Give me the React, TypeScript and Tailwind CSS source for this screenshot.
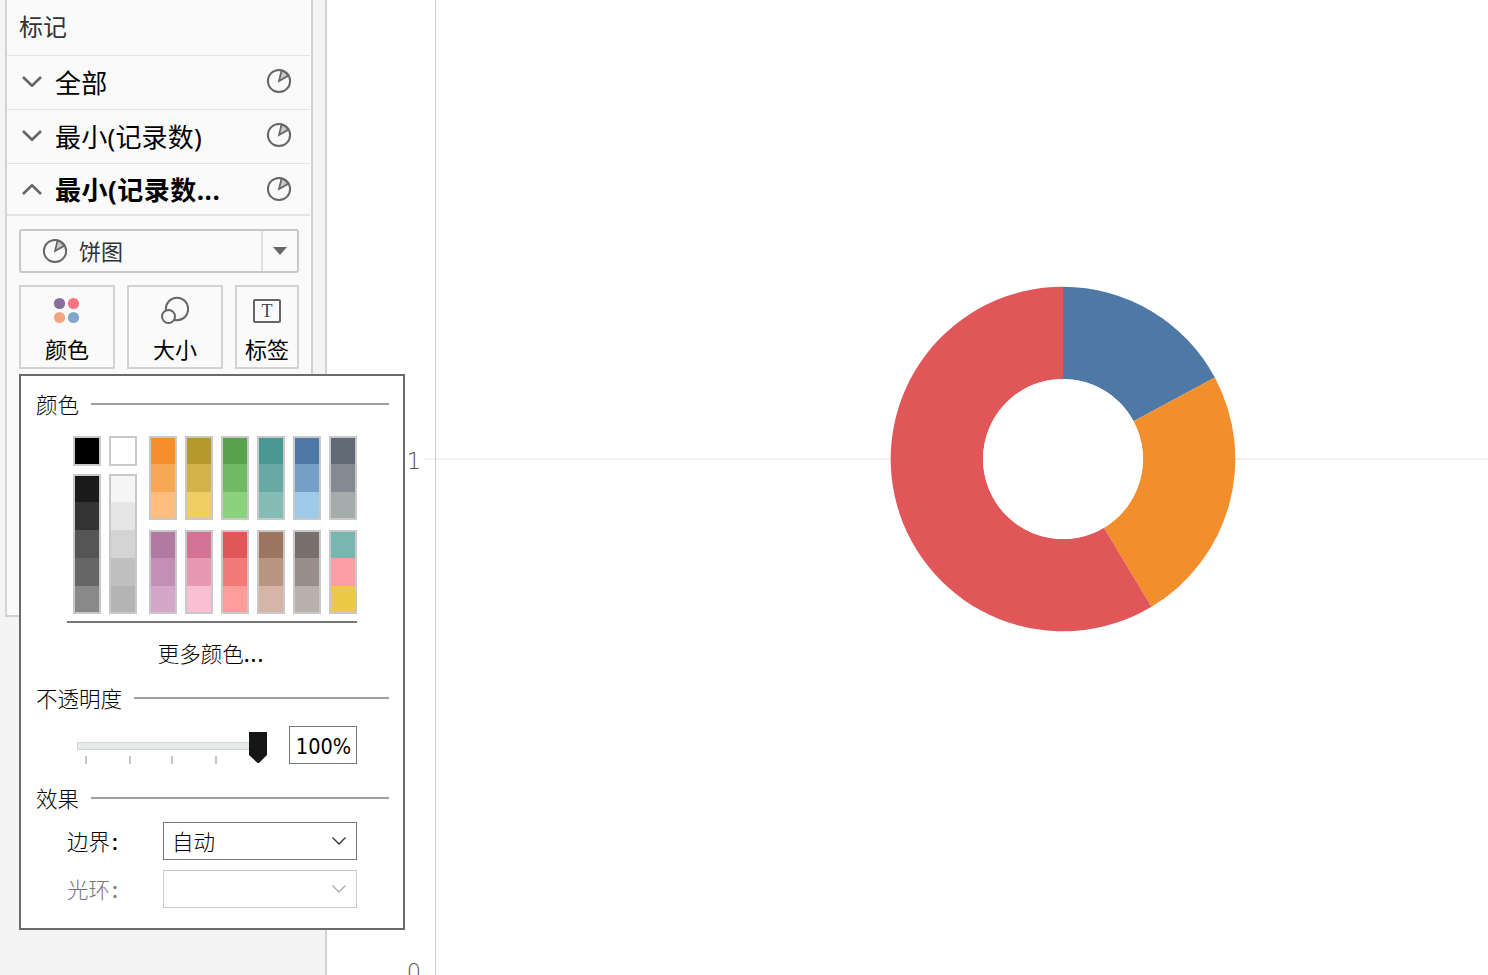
import { useState } from 'react'

const BASIC = [
  { solid: '#000000', shades: ['#1a1a1a', '#333333', '#555555', '#666666', '#898989'] },
  { solid: '#ffffff', shades: ['#f5f5f5', '#e6e6e6', '#d4d4d4', '#c0c0c0', '#b4b4b4'] },
]

const PALETTE = [
  ['#f58f2c', '#faa755', '#ffbe7d'],
  ['#b6992d', '#d2b349', '#f1ce63'],
  ['#59a14f', '#71b966', '#8cd17d'],
  ['#499894', '#69a9a4', '#86bcb6'],
  ['#4e79a7', '#769fc7', '#a0cbe8'],
  ['#616b75', '#838a92', '#a5acac'],
  ['#b07aa1', '#c28fb5', '#d4a6c8'],
  ['#d37295', '#e799b3', '#fabfd2'],
  ['#e15759', '#f27b79', '#ff9d9a'],
  ['#9d7660', '#b99480', '#d7b5a6'],
  ['#79706e', '#998e8c', '#bab0ac'],
  ['#79b6b0', '#ff9da7', '#edc948'],
]

const CARDS = [
  { label: '全部', open: false },
  { label: '最小(记录数)', open: false },
  { label: '最小(记录数...', open: true },
]

const SLICES = [
  { from: 0, to: 61.8, color: '#4e79a7' },
  { from: 61.8, to: 149.1, color: '#f38e2c' },
  { from: 149.1, to: 360, color: '#e15759' },
]

function slicePath(from: number, to: number, outer: number, inner: number) {
  const pt = (deg: number, r: number) => {
    const a = (deg * Math.PI) / 180
    return `${(r * Math.sin(a)).toFixed(2)} ${(-r * Math.cos(a)).toFixed(2)}`
  }
  const large = to - from > 180 ? 1 : 0
  return `M${pt(from, outer)}A${outer} ${outer} 0 ${large} 1 ${pt(to, outer)}L${pt(to, inner)}A${inner} ${inner} 0 ${large} 0 ${pt(from, inner)}Z`
}

function PieIcon() {
  return (
    <svg width="26" height="26" viewBox="0 0 26 26" fill="none" stroke="#666" strokeWidth="2" className="shrink-0">
      <path d="M13 13L15.6 2.4A11 11 0 0 1 22.2 7.8Z" fill="#c8c8c8" strokeWidth="1.7" />
      <circle cx="13" cy="13" r="11.1" />
    </svg>
  )
}

function Chevron({ up }: { up?: boolean }) {
  return (
    <svg width="20" height="12" viewBox="0 0 20 12" fill="none" stroke="#666" strokeWidth="2.6" className="shrink-0">
      <path d={up ? 'M1 11L10 2.2L19 11' : 'M1 2L10 10.8L19 2'} />
    </svg>
  )
}

function SelectArrow({ color }: { color: string }) {
  return (
    <svg width="14" height="8" viewBox="0 0 14 8" fill="none" stroke={color} strokeWidth="1.3">
      <path d="M0.5 0.5L7 7L13.5 0.5" />
    </svg>
  )
}

function Swatch({ colors }: { colors: string[] }) {
  return (
    <div className="flex w-7 flex-col border-2 border-[#c8c8c8]">
      {colors.map((c, i) => (
        <button
          key={c}
          className={i === 0 || i === colors.length - 1 ? 'h-[26px]' : 'h-7'}
          style={{ backgroundColor: c }}
        />
      ))}
    </div>
  )
}

function SectionTitle({ text }: { text: string }) {
  return (
    <div className="flex h-8 items-center">
      <span className="whitespace-nowrap pt-0.5 text-[21.5px] leading-8">{text}</span>
      <div className="ml-3 h-0.5 flex-1 bg-[#a0a0a0]" />
    </div>
  )
}

function ColorPopup() {
  const [opacity, setOpacity] = useState('100%')

  return (
    <div className="absolute left-[19px] top-[374px] h-[556px] w-[386px] border-2 border-[#6b6b6b] bg-white pl-[15px] pr-[14px] pt-[12px] font-['Noto_Sans','Noto_Sans_CJK_SC',sans-serif] font-light text-black">
      <SectionTitle text="颜色" />

      <div className="ml-[37px] mt-4 flex h-[178px]">
        <div className="flex gap-2">
          {BASIC.map((b) => (
            <div key={b.solid} className="flex flex-col gap-2">
              <button className="h-[30px] w-7 border-2 border-[#c8c8c8]" style={{ backgroundColor: b.solid }} />
              <Swatch colors={b.shades} />
            </div>
          ))}
        </div>
        <div className="ml-3 grid grid-cols-6 content-start gap-x-2 gap-y-2.5">
          {PALETTE.map((colors) => (
            <Swatch key={colors[0]} colors={colors} />
          ))}
        </div>
      </div>

      <div className="ml-[31px] mt-[7px] h-0.5 w-[290px] bg-[#777]" />
      <button className="ml-[30px] mt-[15px] flex h-8 w-[290px] justify-center text-[21.5px] leading-8">
        更多颜色<span className="font-medium tracking-[1px]">...</span>
      </button>

      <div className="mt-3">
        <SectionTitle text="不透明度" />
      </div>

      <div className="ml-[41px] mt-3 flex h-[38px]">
        <svg width="192" height="38" viewBox="0 0 192 38">
          <rect x="0.5" y="16.5" width="180" height="7" fill="#e6eaea" stroke="#d0d4d4" />
          {[8, 52, 94, 138].map((x) => (
            <rect key={x} x={x} y="30" width="2" height="8" fill="#c6c6c6" />
          ))}
          <path d="M172 6H190V29L182 37H180.5L172 29Z" fill="#161616" />
        </svg>
        <input
          value={opacity}
          onChange={(e) => setOpacity(e.target.value)}
          className="ml-5 h-[38px] w-[68px] border border-[#777] pl-px pt-0.5 text-center font-['DejaVu_Sans_Condensed','DejaVu_Sans',sans-serif] text-[21.5px] font-normal outline-none"
        />
      </div>

      <div className="mt-[18px]">
        <SectionTitle text="效果" />
      </div>

      <div className="ml-[31px] mt-2 flex h-[38px] items-center">
        <span className="w-24 pt-0.5 text-[21.5px]">
          边界<span className="ml-0.5 font-medium">:</span>
        </span>
        <button className="flex h-[38px] w-[194px] items-center justify-between border border-[#777] pl-2 pr-[10px] text-[21.5px]">
          <span className="pt-0.5">自动</span>
          <SelectArrow color="#333" />
        </button>
      </div>
      <div className="ml-[31px] mt-2.5 flex h-[38px] items-center text-[#777]">
        <span className="w-24 pt-0.5 text-[21.5px]">
          光环<span className="ml-0.5 font-medium">:</span>
        </span>
        <button disabled className="flex h-[38px] w-[194px] items-center justify-end border border-[#ccc] pr-[10px]">
          <SelectArrow color="#aaa" />
        </button>
      </div>
    </div>
  )
}

function MarksPanel() {
  return (
    <aside className="h-[975px] w-[327px] shrink-0 border-r-2 border-[#d2d2d2] bg-[#f4f4f4] pl-[5px]">
      <div className="h-[617px] w-[308px] border-x-2 border-b-2 border-[#d2d2d2] bg-[#fafafa]">
        <div className="h-[55px] pl-3 pt-[9px] text-[24px] leading-9 text-[#333]">标记</div>

        {CARDS.map((card) => (
          <div
            key={card.label}
            className={
              card.open
                ? 'mr-px flex h-[53px] items-center border-b-2 border-t border-[#e4e4e4] pl-[15px] pr-[18px]'
                : 'mr-px flex h-[54px] items-center border-t border-[#e4e4e4] pb-[3px] pl-[15px] pr-[18px]'
            }
          >
            <Chevron up={card.open} />
            <span
              className={
                card.open
                  ? 'ml-[13px] flex-1 pt-[3px] text-[26px] font-bold tracking-[0.5px]'
                  : 'ml-[13px] flex-1 pt-[5px] text-[26px] tracking-[0.2px]'
              }
            >
              {card.label}
            </span>
            <PieIcon />
          </div>
        ))}

        <div className="px-3 pt-[13px]">
          <button className="flex h-11 w-[280px] items-center rounded-[3px] border-2 border-[#c8c8c8] pl-[21px]">
            <PieIcon />
            <span className="ml-[11px] flex-1 text-left text-[22px] text-[#333]">饼图</span>
            <span className="flex h-10 w-9 items-center justify-center border-l-2 border-[#e0e0e0]">
              <svg width="14" height="8" viewBox="0 0 14 8">
                <path d="M0 0H14L7 8Z" fill="#666" />
              </svg>
            </span>
          </button>

          <div className="mt-3 flex gap-3">
            <button className="flex h-[84px] w-24 flex-col items-center border-2 border-[#d2d2d2] pt-[9px]">
              <svg width="28" height="28" viewBox="0 0 28 28">
                <circle cx="6.5" cy="7.5" r="5.6" fill="#866f98" />
                <circle cx="20.5" cy="7.5" r="5.6" fill="#fa7383" />
                <circle cx="6.5" cy="21.5" r="5.6" fill="#f2a77f" />
                <circle cx="20.5" cy="21.5" r="5.6" fill="#82a5cc" />
              </svg>
              <span className="mt-[9px] text-[22px] leading-8">颜色</span>
            </button>
            <button className="flex h-[84px] w-24 flex-col items-center border-2 border-[#d2d2d2] pt-[9px]">
              <svg width="28" height="28" viewBox="0 0 28 28" fill="#fafafa" stroke="#666" strokeWidth="2">
                <circle cx="16" cy="13" r="11.2" />
                <circle cx="7.5" cy="20.5" r="6.5" />
              </svg>
              <span className="mt-[9px] text-[22px] leading-8">大小</span>
            </button>
            <button className="flex h-[84px] w-16 flex-col items-center border-2 border-[#d2d2d2] pt-3">
              <span className="flex h-6 w-7 items-center justify-center rounded-[2px] border-2 border-[#666] font-['Liberation_Serif',serif] text-[18px] leading-none text-[#444]">
                T
              </span>
              <span className="mt-[10px] text-[22px] leading-8">标签</span>
            </button>
          </div>
        </div>
      </div>
    </aside>
  )
}

function DonutChart() {
  return (
    <main className="flex h-[975px] flex-1 overflow-hidden">
      <div className="flex w-[108px] flex-col pt-[443px] font-['DejaVu_Sans_Light','DejaVu_Sans',sans-serif] text-[22.5px] font-extralight text-[#555]">
        <div className="flex h-8 items-center justify-end">
          <span className="mr-[3px] pt-[3px] leading-8">1</span>
          <span className="h-0.5 w-[11px] bg-[#f2f2f2]" />
        </div>
        <span className="mt-[481px] pr-[14px] text-right leading-8">0</span>
      </div>
      <svg width="1053" height="975" viewBox="435 0 1053 975" className="shrink-0">
        <rect x="435" y="458" width="1053" height="2" fill="#f2f2f2" />
        <rect x="435" y="0" width="1" height="975" fill="#ccc" />
        <g transform="translate(1063 459)">
          {SLICES.map((s) => (
            <path key={s.color} d={slicePath(s.from, s.to, 172.3, 80)} fill={s.color} />
          ))}
          <circle r="80" fill="#fff" />
        </g>
      </svg>
    </main>
  )
}

export default function App() {
  return (
    <div className="relative flex h-[975px] w-[1488px] overflow-hidden bg-white font-['Noto_Sans','Noto_Sans_CJK_SC',sans-serif] text-black">
      <MarksPanel />
      <DonutChart />
      <ColorPopup />
    </div>
  )
}
